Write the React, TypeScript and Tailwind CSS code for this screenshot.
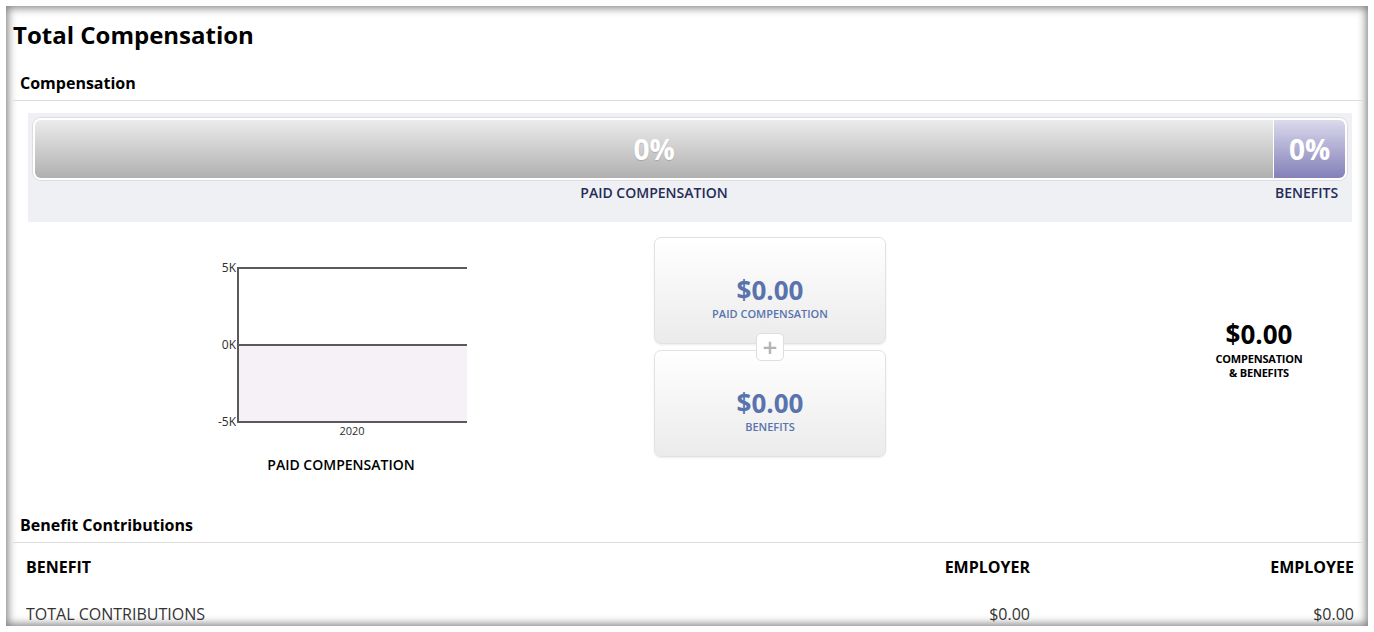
const font = { fontFamily: '"Open Sans", "Noto Sans", Arial, sans-serif' };

function SectionHeading({ children }: { children: React.ReactNode }) {
  return (
    <div className="border-b border-[#dcdcdc] pb-[7px] pl-[7px] text-[16px] font-bold leading-[20px] text-black">
      {children}
    </div>
  );
}

function SplitBar() {
  return (
    <div className="ml-[15px] mr-[10px] mt-[12px] bg-[#eff0f4] px-[5px] pb-[20px] pt-[5px]">
      <div className="flex h-[62px] overflow-hidden rounded-[8px] border-2 border-white shadow-[0_0_0_1px_#dcdce2]">
        <div className="flex flex-1 items-center justify-center bg-gradient-to-b from-[#ececec] to-[#b0b0b0] text-[28px] font-bold text-white [text-shadow:0_1px_1px_rgba(0,0,0,0.15)]">
          0%
        </div>
        <div className="flex w-[72px] items-center justify-center border-l border-white bg-gradient-to-b from-[#dcdaec] to-[#8480b8] text-[28px] font-bold text-white">
          0%
        </div>
      </div>
      <div className="mt-[4px] flex text-[14px] font-semibold leading-[18px] text-[#262b57]">
        <div className="flex-1 text-center">PAID COMPENSATION</div>
        <div className="w-[72px] pr-[10px] text-center">BENEFITS</div>
      </div>
    </div>
  );
}

function PaidChart() {
  return (
    <div className="ml-[200px] mt-[22px] flex w-[256px] flex-col items-center">
      <svg width="256" height="180" viewBox="0 0 256 180" className="block">
        <rect x="25" y="86" width="229" height="77" fill="#f5f1f6" />
        <line x1="25" y1="9" x2="254" y2="9" stroke="#5a5a5a" strokeWidth="2" />
        <line x1="25" y1="86" x2="254" y2="86" stroke="#5a5a5a" strokeWidth="2" />
        <line x1="25" y1="163" x2="254" y2="163" stroke="#5a5a5a" strokeWidth="2" />
        <line x1="25" y1="8" x2="25" y2="164" stroke="#5a5a5a" strokeWidth="2" />
        <g fontSize="12" fill="#2e2e2e" textAnchor="end" style={font}>
          <text x="23" y="13">5K</text>
          <text x="23" y="90">0K</text>
          <text x="23" y="167">-5K</text>
        </g>
        <text x="139" y="176" fontSize="11" fill="#2e2e2e" textAnchor="middle" style={font}>
          2020
        </text>
      </svg>
      <div className="mt-[15px] text-[14px] font-semibold text-black">PAID COMPENSATION</div>
    </div>
  );
}

function AmountCard({ label }: { label: string }) {
  return (
    <div className="flex h-[107px] flex-col items-center justify-center rounded-[7px] border border-[#e2e2e2] bg-gradient-to-b from-white to-[#ebebeb] pt-[13px] shadow-[0_1px_2px_rgba(0,0,0,0.08)]">
      <div className="text-[26px] font-bold leading-[30px] text-[#5873ad]">$0.00</div>
      <div className="mt-[2px] text-[11px] font-semibold leading-[13px] text-[#5873ad]">{label}</div>
    </div>
  );
}

function Breakdown() {
  return (
    <div className="ml-[185px] flex w-[232px] flex-col">
      <AmountCard label="PAID COMPENSATION" />
      <div className="relative h-[6px]">
        <div className="absolute left-1/2 top-[-11px] z-10 flex h-[28px] w-[28px] -translate-x-1/2 items-center justify-center rounded-[5px] border border-[#dedede] bg-white text-[26px] font-semibold leading-none text-[#b4b4b4]">
          +
        </div>
      </div>
      <AmountCard label="BENEFITS" />
    </div>
  );
}

export default function App() {
  return (
    <div className="h-[632px] w-[1374px] bg-white p-[6px] text-black" style={font}>
      <div className="h-full overflow-hidden pl-[7px] pr-[6px] pt-[14px] shadow-[inset_0_0_9px_2px_rgba(0,0,0,0.5)]">
        <h1 className="text-[24px] font-bold leading-[30px]">Total Compensation</h1>

        <div className="mt-[23px]">
          <SectionHeading>Compensation</SectionHeading>
        </div>
        <SplitBar />

        <div className="mt-[15px] flex items-start">
          <PaidChart />
          <Breakdown />
          <div className="ml-[313px] mt-[82px] flex w-[120px] flex-col items-center">
            <div className="text-[26px] font-bold leading-[30px]">$0.00</div>
            <div className="mt-[3px] text-center text-[11px] font-bold leading-[14px] tracking-[-0.2px]">
              COMPENSATION
              <br />& BENEFITS
            </div>
          </div>
        </div>

        <div className="mt-[40px]">
          <SectionHeading>Benefit Contributions</SectionHeading>
        </div>
        <table className="w-full border-collapse text-[16px]">
          <thead>
            <tr className="h-[48px] text-left font-bold">
              <th className="pl-[13px]">BENEFIT</th>
              <th className="text-right">EMPLOYER</th>
              <th className="w-[332px] pr-[8px] text-right">EMPLOYEE</th>
            </tr>
          </thead>
          <tbody>
            <tr className="h-[46px] text-[#333]">
              <td className="pl-[13px]">TOTAL CONTRIBUTIONS</td>
              <td className="text-right">$0.00</td>
              <td className="pr-[8px] text-right">$0.00</td>
            </tr>
          </tbody>
        </table>
      </div>
    </div>
  );
}
